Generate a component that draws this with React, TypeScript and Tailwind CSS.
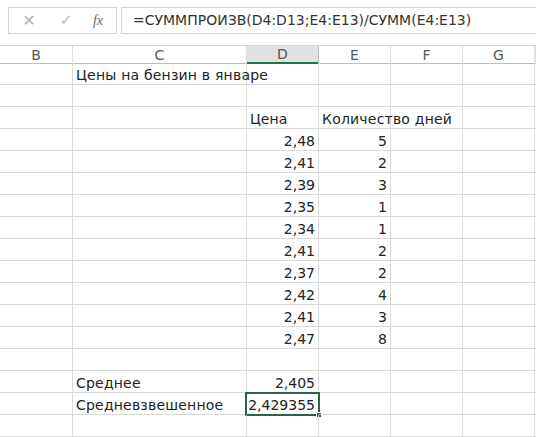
import React from 'react';

type Row = { c?: string; d?: string; e?: string; dLeft?: boolean; eLeft?: boolean; sel?: boolean };

const rows: Row[] = [
  { c: 'Цены на бензин в январе' },
  {},
  { d: 'Цена', dLeft: true, e: 'Количество дней', eLeft: true },
  { d: '2,48', e: '5' },
  { d: '2,41', e: '2' },
  { d: '2,39', e: '3' },
  { d: '2,35', e: '1' },
  { d: '2,34', e: '1' },
  { d: '2,41', e: '2' },
  { d: '2,37', e: '2' },
  { d: '2,42', e: '4' },
  { d: '2,41', e: '3' },
  { d: '2,47', e: '8' },
  {},
  { c: 'Среднее', d: '2,405' },
  { c: 'Средневзвешенное', d: '2,429355', sel: true },
  {},
];

const cols = 'grid grid-cols-[73px_174px_72px_72px_72px_72px_1fr]';

const Cell: React.FC<{ text?: string; left?: boolean; overflow?: boolean; className?: string }> = ({
  text,
  left = true,
  overflow = false,
  className = '',
}) => (
  <div
    className={`relative h-[22px] border-r border-b border-[#d9d9d9] flex items-end pb-[2px] ${
      left ? 'justify-start pl-[3px]' : 'justify-end pr-[3px]'
    } ${className}`}
  >
    {text && (
      <span
        className={`whitespace-nowrap leading-none tracking-[0.2px] ${
          overflow ? 'absolute left-[3px] bottom-[2px] z-10' : ''
        }`}
      >
        {text}
      </span>
    )}
  </div>
);

const App: React.FC = () => {
  return (
    <div
      className="w-[536px] h-[437px] overflow-hidden bg-white text-[#222] text-[14px]"
      style={{ fontFamily: '"DejaVu Sans", sans-serif' }}
    >
      {/* formula bar */}
      <div className="h-[45px] flex items-start pt-[7px] pl-[8px] gap-[4px]">
        <div className="w-[109px] h-[27px] border border-[#d4d4d4] flex items-center text-[#b5b5b5]">
          <span className="w-[40px] text-center text-[16px]">✕</span>
          <span className="w-[34px] text-center text-[15px]">✓</span>
          <span
            className="w-[30px] text-center text-[14px] text-[#666] italic"
            style={{ fontFamily: '"Liberation Serif", serif' }}
          >
            fx
          </span>
        </div>
        <div className="flex-1 h-[27px] border border-r-0 border-[#d4d4d4] flex items-center pl-[11px] text-[14px] text-[#333]">
          =СУММПРОИЗВ(D4:D13;E4:E13)/СУММ(E4:E13)
        </div>
      </div>

      {/* column headers */}
      <div className={`${cols} h-[18px] border-t border-[#d4d4d4] text-[#555] text-[14px]`}>
        {['B', 'C', 'D', 'E', 'F', 'G', ''].map((h) => (
          <div
            key={h}
            className={`h-[18px] flex items-center justify-center leading-none ${
              h === 'D'
                ? 'bg-[#e1e1e1] border-b-2 border-[#217346] border-r border-r-[#bdbdbd]'
                : 'border-b border-[#bdbdbd] border-r border-r-[#e0e0e0]'
            }`}
          >
            {h}
          </div>
        ))}
      </div>

      {/* grid rows */}
      {rows.map((r, i) => (
        <div key={i} className={cols}>
          <Cell />
          <Cell text={r.c} overflow />
          <div
            className={`relative h-[22px] border-r border-b border-[#d9d9d9] flex items-end pb-[2px] ${
              r.dLeft ? 'justify-start pl-[3px]' : 'justify-end pr-[3px]'
            }`}
          >
            {r.d && <span className="whitespace-nowrap leading-none">{r.d}</span>}
            {r.sel && (
              <>
                <div className="absolute -left-[2px] -top-[1px] w-[75px] h-[24px] border-2 border-[#2f6047] pointer-events-none" />
                <div className="absolute -right-[4px] -bottom-[4px] w-[6px] h-[6px] bg-[#2f6047] border border-white" />
              </>
            )}
          </div>
          <div
            className={`relative h-[22px] border-r border-b border-[#d9d9d9] flex items-end pb-[2px] ${
              r.eLeft ? 'justify-start pl-[3px]' : 'justify-end pr-[3px]'
            }`}
          >
            {r.e && (
              <span
                className={`whitespace-nowrap leading-none ${
                  r.eLeft ? 'absolute left-[3px] bottom-[2px] z-10 tracking-[0.2px]' : ''
                }`}
              >
                {r.e}
              </span>
            )}
          </div>
          <Cell />
          <Cell />
          <div className="h-[22px] border-b border-[#d9d9d9]" />
        </div>
      ))}
    </div>
  );
};

export default App;
